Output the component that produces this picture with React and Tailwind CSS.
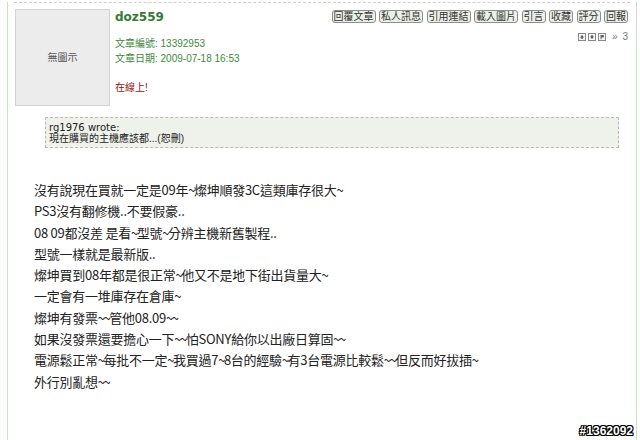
import React from 'react';

const buttons = ['回覆文章', '私人訊息', '引用連結', '載入圖片', '引言', '收藏', '評分', '回報'];

const lines = [
  '沒有說現在買就一定是09年~燦坤順發3C這類庫存很大~',
  'PS3沒有翻修機..不要假豪..',
  '08 09都沒差 是看~型號~分辨主機新舊製程..',
  '型號一樣就是最新版..',
  '燦坤買到08年都是很正常~他又不是地下街出貨量大~',
  '一定會有一堆庫存在倉庫~',
  '燦坤有發票~~管他08.09~~',
  '如果沒發票還要擔心一下~~怕SONY給你以出廠日算固~~',
  '電源鬆正常~每批不一定~我買過7~8台的經驗~有3台電源比較鬆~~但反而好拔插~',
  '外行別亂想~~',
];

const font = { fontFamily: '"Liberation Sans", "Noto Sans CJK TC", sans-serif' };

// tildes in the original are set a bit tighter than the body font's
function Line({ text }) {
  const parts = text.split(/(~)/);
  return (
    <div>
      {parts.map((p, i) =>
        p === '~' ? (
          <span key={i} className="tracking-[-1.5px]">~</span>
        ) : (
          <React.Fragment key={i}>{p}</React.Fragment>
        )
      )}
    </div>
  );
}

function TinyIcon({ kind }) {
  return (
    <svg width="8" height="8" viewBox="0 0 8 8" className="block">
      <rect x="0.5" y="0.5" width="7" height="7" fill="#f4f4f4" stroke="#8a8a8a" />
      {kind === 'up' && <path d="M4 2 L6 4.5 H4.7 V6 H3.3 V4.5 H2 Z" fill="#555" />}
      {kind === 'down' && <path d="M4 6 L6 3.5 H4.7 V2 H3.3 V3.5 H2 Z" fill="#555" />}
      {kind === 'p' && <path d="M2.5 2 H5 Q6 2 6 3.2 Q6 4.4 5 4.4 H3.5 V6.2 H2.5 Z" fill="#666" />}
    </svg>
  );
}

export default function App() {
  return (
    <div className="w-[640px] h-[440px] bg-white overflow-hidden relative" style={font}>
      <div className="ml-[7px] w-[630px] h-[440px] border-l border-r border-[#c9e0c9]">
        {/* dashed top rule */}
        <div className="mx-[6px] mt-[2px] border-t border-dashed border-[#cfcfcf]"></div>

        {/* Post header */}
        <div className="flex items-start pl-[7px] pr-[8px] pt-[6px]">
          <div className="w-[95px] h-[97px] bg-[#ececec] border border-[#d3d3d3] flex items-center justify-center text-[10px] text-[#555]">
            無圖示
          </div>

          <div className="flex-1 flex justify-between ml-[5px]">
            <div>
              <div className="text-[12px] leading-[16px] font-bold text-[#367a36]" style={{ fontFamily: '"DejaVu Sans", sans-serif' }}>
                doz559
              </div>
              <div className="mt-[11px] text-[10px] leading-[15px] text-[#3d8a3d]">
                <div>文章編號: 13392953</div>
                <div>文章日期: 2009-07-18 16:53</div>
              </div>
              <div className="mt-[14px] text-[10px] leading-[15px] text-[#8f1111]">在線上!</div>
            </div>

            <div className="flex flex-col items-end">
              <div className="flex gap-[3.5px] mt-[1px]">
                {buttons.map((b) => (
                  <span
                    key={b}
                    className="h-[13px] px-[1px] border border-[#8d8d8d] rounded-[3px] bg-[#ebf1e7] text-[10px] leading-[11px] text-[#333] flex items-center"
                  >
                    {b}
                  </span>
                ))}
              </div>
              <div className="flex items-center gap-[2px] mt-[9px] text-[10px] leading-[10px] text-[#777]">
                <TinyIcon kind="up" />
                <TinyIcon kind="down" />
                <TinyIcon kind="p" />
                <span className="ml-[4px]">»</span>
                <span className="ml-[3px]">3</span>
              </div>
            </div>
          </div>
        </div>

        {/* Quote */}
        <div className="ml-[37px] mr-[17px] mt-[11px] border border-dashed border-[#b9b9b9] bg-[#eef2ea] pl-[3px] pt-[4px] pb-[3px] text-[10px] leading-[11px] text-[#222]">
          <div style={{ fontFamily: '"DejaVu Sans", sans-serif' }}>rg1976 wrote:</div>
          <div>現在購買的主機應該都...(恕刪)</div>
        </div>

        {/* Body */}
        <div
          className="pl-[26px] mt-[31px] text-[13px] leading-[21.3px] tracking-[-0.25px] text-[#222]"
          style={{ fontFamily: '"Noto Sans CJK TC", "Liberation Sans", sans-serif' }}
        >
          {lines.map((l, i) => (
            <Line key={i} text={l} />
          ))}
        </div>
      </div>

      {/* watermark */}
      <div
        className="absolute right-[7px] bottom-[2px] text-[12px] font-bold text-white leading-[14px]"
        style={{ fontFamily: '"Liberation Sans", sans-serif', textShadow: '1px 0 0 #000, -1px 0 0 #000, 0 1px 0 #000, 0 -1px 0 #000, 1px 1px 0 #000, -1px -1px 0 #000, 1px -1px 0 #000, -1px 1px 0 #000' }}
      >
        #1362092
      </div>
    </div>
  );
}
